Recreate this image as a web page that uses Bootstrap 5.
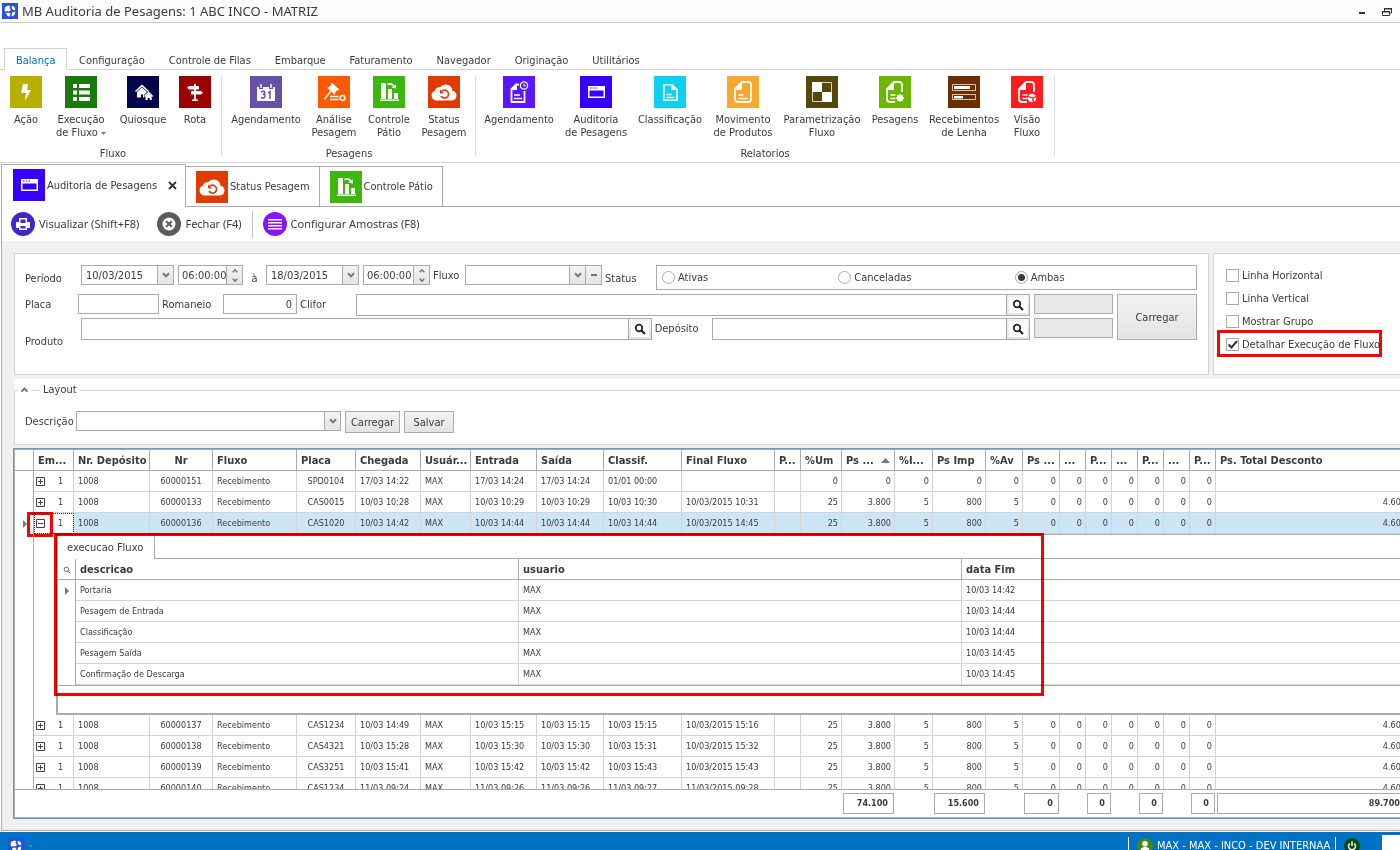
<!DOCTYPE html>
<html lang="pt-BR">
<head>
<meta charset="utf-8">
<meta name="viewport" content="width=device-width, initial-scale=1">
<title>MB Auditoria de Pesagens</title>
<link href="https://cdn.jsdelivr.net/npm/bootstrap@5.3.0/dist/css/bootstrap.min.css" rel="stylesheet">
<style>
:root{--line:#ababab;--soft:#d4d4d4;--panel:#f0f0f0;--accent:#0072c6;--ink:#3b3b3b}
body{font:11px/13px "DejaVu Sans Condensed","DejaVu Sans",sans-serif;color:var(--ink);background:#fff}
button,input,select{font:inherit;color:inherit;border-radius:0}
.app{height:100vh;overflow:hidden}
.titlebar{height:23px;background:#fcfcfc;border-bottom:1px solid #c8c8c8;padding-left:2px}
.titlebar h1{font:13px/22px "Noto Sans",sans-serif;margin:0 0 0 4px}
.titlebar button,.plain{border:0;background:none;padding:0}
.menubar{margin-top:25px;height:22px;border-bottom:1px solid var(--soft);padding-left:4px}
.menubar a{color:inherit;text-decoration:none;padding:6px 12px 0;height:22px}
.menubar a.active{color:var(--accent);border:1px solid var(--soft);border-bottom-color:#fff;padding:5px 11px 0;background:#fff;width:63px}
.ribbon{height:93px;border-bottom:1px solid var(--soft);padding-top:6px;flex:none}
.rgroup{border-right:1px solid #dcdcdc;height:80px;padding:0 3px 0 4px;text-align:center}
.rgroup:first-child{padding:0 1px 0 6px}
.rgroup:last-child{padding:0 3px}
.rgroup button{height:71px;white-space:pre;display:flex;flex-direction:column;align-items:center;line-height:13px}
.rgroup button svg{margin-bottom:5px;flex:none}
.rgroup button span{margin:0 -6px}
.w-40p{width:40px}.w-48p{width:48px}.w-50p{width:50px}.w-54p{width:54px}.w-56p{width:56px}.w-60p{width:60px}
.w-70p{width:70px}.w-72p{width:72px}.w-74p{width:74px}.w-78p{width:78px}.w-80p{width:80px}.w-86p{width:86px}
.doctabs{height:44px;padding:1px 0 0 1px;flex:none}
.doctabs .dtab{border:1px solid var(--line);border-left-width:0;height:41px;margin-top:2px;display:flex;align-items:center;white-space:nowrap;gap:2px;padding:0 9px 0 10px}
.doctabs .dtab.active{border-left-width:1px;border-bottom:0;height:43px;margin-top:0;padding:0 8px 2px 11px;width:185px}
.doctabs .fillline{border-bottom:1px solid var(--line)}
.frame{border-left:1px solid var(--line);border-bottom:1px solid var(--line);margin:0 0 1px 1px;min-height:0}
.tools{height:34px;padding-left:9px;font:11px/14px "Noto Sans",sans-serif;flex:none}
.tools button{display:flex;align-items:center;gap:4px;white-space:nowrap;margin-right:18px}
.tools .vr1{width:1px;height:27px;background:#c0c0c0;margin:0 10px 0 -8px}
.work{background:var(--panel);padding:12px 0 11px 11px;min-height:0}
.toprow{padding-left:1px}
.box{background:#fff;border:1px solid var(--soft)}
.filters{height:122px;padding:11px 11px 0 10px;min-width:0}
.side{width:187px;border-right:0;flex:none;padding:15px 0 0 12px}
.fld{border:1px solid var(--line);background:#fff;height:20px;padding:0 4px;min-width:0;outline:0;color:var(--ink)}
select.fld{appearance:none}
.tall .fld{height:22px}
.off{background:#e9e9e9}
.joined{display:flex}
.joined .fld{border-right:0}
.joined .pick{border:1px solid var(--line);background:linear-gradient(#f3f3f3,#e4e4e4);width:17px;padding:0;height:20px;display:flex;align-items:center;justify-content:center;flex:none}
.tall .joined .pick{height:22px;width:24px}
.tall .pick svg{background:#fff;padding:2px 3px;box-sizing:content-box}
.spin{border:1px solid var(--line);background:linear-gradient(#f3f3f3,#e4e4e4);width:17px;height:20px;flex:none;display:flex;flex-direction:column}
.spin button{height:9px;display:flex;align-items:center;justify-content:center}
.btnx{border:1px solid var(--line);background:linear-gradient(#f3f3f3,#e3e3e3);padding:0}
.lb{white-space:nowrap;flex:none;line-height:13px}
.low{padding-top:7px}
.w-lb{width:56px}
.dt{width:93px;flex:none;margin-right:4px}
.tm{width:65px;flex:none}.tm2{width:67px;flex:none}
.tm .fld,.tm2 .fld{padding-right:0;padding-left:3px}
.lba{width:23px}.lbf{width:35px;padding-left:3px}.fx{width:137px;flex:none}
.fx .lessb{border-left:0;width:16px}
.lbs{width:54px;padding-left:3px}
.r23{gap:2px;min-width:0}
.lbp{width:53px}.pl{width:81px}.lbr{width:64px;padding-left:3px}.rm{width:74px}.lbc{width:59px;padding-left:3px}
.lbpr{padding-top:17px}
.fpr{flex:570 1 0;min-width:0}.fdp{flex:318 1 0;min-width:0}.lbd{width:60px;padding-left:3px}
.offs .fld{width:79px}.load{width:80px;height:46px}
.ds{width:265px;margin-right:4px}.lbl{width:51px}
.b55{width:55px;height:22px;margin-right:4px}.b50{width:50px;height:22px}
.radios{border:1px solid var(--line);height:25px;padding:0 5px}
.radios label,.side label{display:flex;align-items:center;gap:3px}
input[type=radio],input[type=checkbox]{appearance:none;width:13px;height:13px;border:1px solid var(--line);margin:0;background:#fff}
input[type=radio]{border-radius:50%}
input[type=radio]:checked{background:radial-gradient(circle,#3b3b3b 3px,#fff 4px)}
input[type=checkbox]:checked{background:url("data:image/svg+xml,%3Csvg xmlns='http://www.w3.org/2000/svg' viewBox='0 0 11 11'%3E%3Cpath d='M1.5 5.5l3 3L10 2' fill='none' stroke='%23333' stroke-width='2'/%3E%3C/svg%3E")}
.side label{height:13px;margin-bottom:10px;white-space:nowrap}
.hl{position:absolute;border:3px solid red;pointer-events:none;mix-blend-mode:multiply}
.hl-check{inset:-8px 18px -6px -9px}
.layoutbox{background:#fff;margin:4px 0 3px 1px;flex:none}
.layoutbox fieldset{border:1px solid var(--soft);border-right:0;height:66px;padding:10px 0 0 10px}
.layoutbox legend{float:none;width:auto;margin:0 0 0 -7px;padding:0 4px 0 2px;font-size:11px;line-height:22px;display:flex;align-items:center;gap:3px}
.layoutbox legend i{width:8px;height:1px;background:var(--soft)}
.gridbox{border:1px solid #5c9bdd;border-right:0;background:#fff;min-height:0}
.gridin{border:1px solid var(--line);border-right:0;min-height:0}
.gridscroll{overflow:hidden;min-height:0}
.gt{table-layout:fixed;border-collapse:separate;border-spacing:0;width:calc(100% + 10px);font-size:9px;line-height:13px}
.gt th,.gt td{padding:0 4px;border-right:1px solid var(--soft);border-bottom:1px solid var(--soft);height:21px;white-space:nowrap;overflow:hidden}
.gt th{font-size:11px;border-color:var(--line)}
.gt td.n{text-align:right;padding:0 3px}
.gt td.c,.gt th.c{text-align:center}
.gt td.rh{border-right-color:var(--line);border-bottom:0;position:relative;overflow:visible;padding:0}
.gt td.em{padding:0 0 0 2px;position:relative;overflow:visible}
.em button{vertical-align:middle;width:9px;height:9px;line-height:0;display:inline-block}
.em span{display:inline-block;margin-left:13px}
tr.sel td{background:#cde6f7}
tr.sel td.rh,tr.sel td.em{background:#fff}
tr.sel td.em{outline:1px dotted #333;outline-offset:-1px}
.arr{position:absolute;right:6px;top:7px;border:4px solid transparent;border-left-color:#777;border-right:0}
.hl-exp{left:-7px;top:-1px;width:26px;height:25px}
.gt td.detail{height:181px;padding:0 0 0 22px;overflow:visible;border:0;vertical-align:top}
.panelx{border:2px solid var(--line);border-top-width:1px;border-right:0;height:181px;position:relative}
.hl-panel{left:-4px;top:-2px;width:990px;height:163px}
.ptab{width:97px;height:24px;border-right:1px solid var(--line);font-size:11px;padding:6px 0 0 9px}
.ptab+div{border-bottom:1px solid var(--line)}
.nt{table-layout:fixed;border-collapse:separate;border-spacing:0;width:100%;border-bottom:1px solid var(--line);font-size:9px}
.nt td:first-child,.nt th:first-child{border-right-color:var(--line)}
.nt td:first-child{border-bottom:0;position:relative}
.nt td:last-child,.nt th:last-child{border-right:0}
.totals{border-top:1px solid var(--line);overflow:hidden;flex:none}
.totals td{border:0;height:27px;padding:0 1px}
.totals b{display:block;border:1px solid var(--line);height:21px;line-height:19px;padding-right:5px;text-align:right;margin-top:-1px}
.totals b.end{margin-right:1px;padding-right:7px}
.status{background:var(--accent);color:#fff;height:18px;overflow:hidden;flex:none}
.status .sep{width:1px;height:14px;background:#fff;margin-top:5px}
.status svg,.status .tx{margin-top:6px;flex:none}
.status .tx{line-height:16px;white-space:nowrap;width:178px}
.status .cap{width:18px;background:#fff;margin:3px 0 0 22px;height:16px}
</style>
</head>
<body>
<svg width="0" height="0" class="position-absolute" aria-hidden="true">
<defs>
<symbol id="globe" viewBox="0 0 16 16"><path fill="#2452e0" d="M0 0h16v16H0z"/><path fill="#fff" d="M3 4l3-1.500 2 .5-.5 2L9 7 7 8.500 5 8 3.500 9 2.500 7zM9.500 3l2.500.5L13.500 6 12 7.500 10 6zM4 10l3-.5 1.500 2-1 2.300L5 12.500zM10 9.500l3.300-1-.5 3L10.500 13.500 9.500 12z"/></symbol>
<symbol id="bolt" viewBox="0 0 32 32"><path fill="#fff" d="M13 8h5l-1 6h4l-6 11 1-8h-5z"/></symbol>
<symbol id="list" viewBox="0 0 32 32"><path fill="#fff" d="M8 8h4v4H8zM14 8h11v4H14zM8 14.500h4v4H8zM14 14.500h11v4H14zM8 21h4v4H8zM14 21h11v4H14z"/></symbol>
<symbol id="home" viewBox="0 0 32 32"><path fill="none" stroke="#fff" stroke-width="1.600" d="M8.500 15.500L15 9.500l6.500 6M17.500 20.500l4.200-4 4 4"/><path fill="#fff" d="M10 16l5-4.700 5 4.700-3 3v2.500h-1v-3h-2v3h-4zM18.500 20.500l3.200-3 3 3V24h-2v-2h-2v2h-2.200z"/></symbol>
<symbol id="sign" viewBox="0 0 32 32"><path fill="#fff" d="M15 8h2v16h-2zM10 10h10v3.500H10l-2-1.700zM12 15h10l2 1.700-2 1.800H12zM13 23.500h6V25h-6z"/></symbol>
<symbol id="cal" viewBox="0 0 32 32"><path fill="#fff" d="M7 11h18v14H7z"/><path fill="#6650a8" d="M9 10h4v3H9zM19 10h4v3h-4z"/><path fill="#fff" d="M10.300 8h1.400v4h-1.400zM20.300 8h1.400v4h-1.400z"/><path fill="none" stroke="#6650a8" stroke-width="1.500" d="M11 16q3.800-2 3.800.8 0 1.500-2 1.500 2.400 0 2.200 2Q14.500 23 11 21.500M18 17l2-1.500v7.500"/></symbol>
<symbol id="gavel" viewBox="0 0 32 32"><path fill="#fff" d="M14 8l6 5.500-3.500 3.800-6-5.600z"/><path stroke="#fff" stroke-width="1.500" fill="none" d="M13.500 7.300l7.300 6.700M9.800 11.400l7.300 6.700M12.500 15.500L6.500 23M12 20.500h8.500M12 23.500h8.500"/><circle cx="24.500" cy="22" r="2.400" fill="none" stroke="#fff" stroke-width="1.500"/></symbol>
<symbol id="bars" viewBox="0 0 32 32"><path fill="#fff" d="M8 7h5v16H8zM15 13h4v10h-4zM21 17h4v6h-4zM7 23.500h19V25H7z"/><path fill="none" stroke="#fff" stroke-width="1.500" d="M14.500 8.500q4-2 7 2.500"/><path fill="#fff" d="M18.500 11.500l4.500-3v4z"/></symbol>
<symbol id="cloud" viewBox="0 0 32 32"><path fill="#fff" d="M8 24.500a5 5 0 0 1-1-9.700 4.500 4.500 0 0 1 5-3.500 7 7 0 0 1 12.500 3.400 5 5 0 0 1 0 9.800z"/><path fill="none" stroke="#e03c00" stroke-width="1.600" d="M13.500 15.500a4 4 0 1 1-.5 4.500"/><path fill="#e03c00" d="M12 13.500v4h4z"/></symbol>
<symbol id="docclock" viewBox="0 0 32 32"><path fill="none" stroke="#fff" stroke-width="1.800" d="M16 8.500h-3L8.500 13v13h13V15"/><path fill="#fff" d="M14 8v6H8z"/><path stroke="#fff" stroke-width="1.300" d="M11 19h6M11 22.500h8"/><circle cx="21" cy="9.500" r="3.600" fill="none" stroke="#fff" stroke-width="1.300"/><path fill="none" stroke="#fff" d="M21 7.500v2.300h1.700"/></symbol>
<symbol id="win" viewBox="0 0 32 32"><path fill="#fff" d="M8 10h17v12H8z"/><path fill="#3600ff" d="M9.500 14.500h14v6h-14zM10 11.500h1.500v1H10zM12.700 11.500h1.500v1h-1.500zM15.400 11.500h1.500v1h-1.500z"/></symbol>
<symbol id="doc" viewBox="0 0 32 32"><path fill="none" stroke="#fff" stroke-width="1.500" d="M18 8.700h-8v15.600h13V13.500z"/><path fill="#fff" d="M17.500 8l6 6h-6z"/><path stroke="#fff" stroke-width="1.300" d="M12.500 18.500h5M12.500 21.500h8"/></symbol>
<symbol id="doc2" viewBox="0 0 32 32"><path fill="none" stroke="#fff" stroke-width="1.800" d="M15 6h6q3 0 3 3v14q0 3-3 3H11q-3 0-3-3V13z"/><path fill="#fff" d="M15 5.500V14H8z"/><path stroke="#fff" stroke-width="1.300" d="M11.500 19h5M11.500 22.500h9"/></symbol>
<symbol id="check" viewBox="0 0 32 32"><path fill="none" stroke="#d8d4b8" d="M6.500 6.500h19v19h-19z"/><path fill="#fff" d="M6 6h10v10H6zM16 16h10v10H16z"/></symbol>
<symbol id="docpart" viewBox="0 0 32 32"><path fill="none" stroke="#fff" stroke-width="1.800" d="M15 6h5q3 0 3 3v7M16 26h-5q-3 0-3-3V13l7-7"/><path fill="#fff" d="M15 5.500V14H8z"/><path stroke="#fff" stroke-width="1.300" d="M11.500 19h5M11.500 22.500h5"/></symbol>
<symbol id="rows" viewBox="0 0 32 32"><path fill="none" stroke="#d8c4b4" d="M4.500 8.500h23v6h-23zM4.500 18.500h23v5h-23z"/><path fill="#fff" d="M6 10h16v3H6zM6 20h9v2.500H6z"/></symbol>
<symbol id="car" viewBox="0 0 8 8"><path fill="none" stroke="#777" stroke-width="2" d="M1 2.200l3 3.200 3-3.200"/></symbol>
<symbol id="up" viewBox="0 0 8 8"><path fill="none" stroke="#777" stroke-width="2" d="M1 5.600L4 2.400l3 3.200"/></symbol>
<symbol id="lens" viewBox="0 0 12 12"><circle cx="5" cy="5" r="3.300" fill="none" stroke="#222" stroke-width="1.700"/><path stroke="#222" stroke-width="2.200" d="M7.500 7.500L11 11"/></symbol>
<symbol id="plus" viewBox="0 0 9 9"><path fill="#fff" stroke="#444" d="M.5.5h8v8h-8z"/><path stroke="#444" d="M2 4.500h5M4.500 2v5"/></symbol>
<symbol id="minus" viewBox="0 0 9 9"><path fill="#fff" stroke="#444" d="M.5.5h8v8h-8z"/><path stroke="#444" d="M2 4.500h5"/></symbol>
</defs>
</svg>

<div class="app d-flex flex-column">
  <header class="titlebar d-flex align-items-center flex-shrink-0">
    <svg width="16" height="16"><use href="#globe"/></svg>
    <h1 class="flex-grow-1">MB Auditoria de Pesagens: 1 ABC INCO - MATRIZ</h1>
    <button aria-label="Minimizar" class="me-3"><svg width="8" height="8"><path fill="#333" d="M1 4h6v2H1z"/></svg></button>
    <button aria-label="Restaurar" class="me-2"><svg width="10" height="10"><path fill="none" stroke="#333" d="M2.500 4V1.500h7V6H8M.5 4.500h7v4h-7z"/><path fill="#333" d="M2 1h8v1.500H2zM0 4h8v1.500H0z"/></svg></button>
  </header>

  <nav class="menubar d-flex flex-shrink-0">
    <a href="#" class="active">Balança</a><a href="#">Configuração</a><a href="#">Controle de Filas</a><a href="#">Embarque</a><a href="#">Faturamento</a><a href="#">Navegador</a><a href="#">Originação</a><a href="#">Utilitários</a>
  </nav>

  <section class="ribbon d-flex" id="ribbon"></section>

  <div class="doctabs d-flex">
    <div class="dtab active"><svg width="32" height="32"><path fill="#3600ff" d="M0 0h32v32H0z"/><use href="#win"/></svg><span class="flex-grow-1">Auditoria de Pesagens</span><button class="plain" aria-label="Fechar aba"><svg width="9" height="9" class="d-block"><path stroke="#333" stroke-width="1.800" d="M1 1l7 7M8 1L1 8"/></svg></button></div>
    <div class="dtab"><svg width="32" height="32"><path fill="#e03c00" d="M0 0h32v32H0z"/><use href="#cloud"/></svg><span>Status Pesagem</span></div>
    <div class="dtab"><svg width="32" height="32"><path fill="#3cb80c" d="M0 0h32v32H0z"/><use href="#bars"/></svg><span>Controle Pátio</span></div>
    <div class="fillline flex-grow-1"></div>
  </div>

  <main class="frame d-flex flex-column flex-grow-1">
    <div class="tools d-flex align-items-center">
      <button class="plain"><svg width="24" height="24"><circle cx="12" cy="12" r="12" fill="#4326d0"/><path fill="#fff" d="M8 6h8v4h2q1 0 1 1v5h-3v2H8v-2H5v-5q0-1 1-1h2z"/><path fill="#4326d0" d="M9.500 7.500h5V11h-5zM9.500 14h5v2.500h-5z"/></svg>Visualizar (Shift+F8)</button>
      <button class="plain"><svg width="24" height="24"><circle cx="12" cy="12" r="12" fill="#5c5c5c"/><circle cx="12" cy="12" r="6.500" fill="#fff"/><path stroke="#5c5c5c" stroke-width="2" d="M9.200 9.200l5.600 5.600M14.800 9.200l-5.600 5.600"/></svg>Fechar (F4)</button>
      <span class="vr1"></span>
      <button class="plain"><svg width="24" height="24"><circle cx="12" cy="12" r="12" fill="#8a12ff"/><path fill="#fff" d="M5 7h14v1.500H5zM5 10h14v1.500H5zM5 13h14v1.500H5zM5 16h14v1.500H5z"/></svg>Configurar Amostras (F8)</button>
    </div>

    <div class="work d-flex flex-column flex-grow-1">
      <div class="toprow d-flex gap-1 flex-shrink-0">
        <form class="box filters flex-grow-1" onsubmit="return false">
          <div class="d-flex align-items-start">
            <label class="lb w-lb low" for="d1">Período</label>
            <div class="joined dt"><input class="fld w-100" id="d1" value="10/03/2015"><button class="pick" aria-label="Abrir calendário"><svg width="8" height="8"><use href="#car"/></svg></button></div>
            <div class="joined tm"><input class="fld w-100" aria-label="Hora inicial" value="06:00:00"><span class="spin"><button class="plain" aria-label="Mais"><svg width="6" height="6"><use href="#up"/></svg></button><button class="plain" aria-label="Menos"><svg width="6" height="6"><use href="#car"/></svg></button></span></div>
            <label class="lb low text-center lba" for="d2">à</label>
            <div class="joined dt"><input class="fld w-100" id="d2" value="18/03/2015"><button class="pick" aria-label="Abrir calendário"><svg width="8" height="8"><use href="#car"/></svg></button></div>
            <div class="joined tm2"><input class="fld w-100" aria-label="Hora final" value="06:00:00"><span class="spin"><button class="plain" aria-label="Mais"><svg width="6" height="6"><use href="#up"/></svg></button><button class="plain" aria-label="Menos"><svg width="6" height="6"><use href="#car"/></svg></button></span></div>
            <label class="lb lbf pt-1" for="fx">Fluxo</label>
            <div class="joined fx"><select class="fld w-100" id="fx"><option></option></select><button class="pick" tabindex="-1" aria-label="Abrir lista"><svg width="8" height="8"><use href="#car"/></svg></button><button class="pick lessb" aria-label="Limpar"><svg width="6" height="8"><path fill="#777" d="M0 3h6v2H0z"/></svg></button></div>
            <span class="lb lbs low">Status</span>
            <div class="radios d-flex flex-grow-1">
              <label class="col"><input type="radio" name="st">Ativas</label><label class="col"><input type="radio" name="st">Canceladas</label><label class="col"><input type="radio" name="st" checked>Ambas</label>
            </div>
          </div>
          <div class="d-flex gap-1 mt-1">
            <div class="flex-grow-1 d-flex flex-column r23">
              <div class="d-flex align-items-start">
                <label class="lb lbp pt-1" for="pl">Placa</label><input class="fld pl" id="pl">
                <label class="lb lbr pt-1" for="rm">Romaneio</label><input class="fld rm text-end" id="rm" value="0">
                <label class="lb lbc pt-1" for="cl">Clifor</label>
                <div class="tall flex-grow-1"><div class="joined"><input class="fld w-100" id="cl"><button class="pick" aria-label="Buscar"><svg width="12" height="12"><use href="#lens"/></svg></button></div></div>
              </div>
              <div class="d-flex align-items-start tall">
                <label class="lb w-lb lbpr" for="pr">Produto</label>
                <div class="joined fpr"><input class="fld w-100" id="pr"><button class="pick" aria-label="Buscar"><svg width="12" height="12"><use href="#lens"/></svg></button></div>
                <label class="lb lbd pt-1" for="dp">Depósito</label>
                <div class="joined fdp"><input class="fld w-100" id="dp"><button class="pick" aria-label="Buscar"><svg width="12" height="12"><use href="#lens"/></svg></button></div>
              </div>
            </div>
            <div class="d-flex flex-column gap-1 offs"><input class="fld off" disabled aria-label="Código do clifor"><input class="fld off" disabled aria-label="Código do depósito"></div>
            <button class="btnx load">Carregar</button>
          </div>
        </form>
        <div class="box side">
          <label><input type="checkbox">Linha Horizontal</label>
          <label><input type="checkbox">Linha Vertical</label>
          <label><input type="checkbox">Mostrar Grupo</label>
          <label class="position-relative"><input type="checkbox" checked>Detalhar Execução de Fluxo<span class="hl hl-check"></span></label>
        </div>
      </div>

      <div class="layoutbox">
        <fieldset>
          <legend><svg width="9" height="8"><use href="#up"/></svg><i></i><span>Layout</span></legend>
          <div class="d-flex align-items-start">
            <label class="lb lbl pt-1" for="ds">Descrição</label>
            <div class="joined ds"><select class="fld w-100" id="ds"><option></option></select><button class="pick" tabindex="-1" aria-label="Abrir lista"><svg width="8" height="8"><use href="#car"/></svg></button></div>
            <button class="btnx b55">Carregar</button><button class="btnx b50">Salvar</button>
          </div>
        </fieldset>
      </div>

      <div class="gridbox d-flex flex-column flex-grow-1">
        <div class="gridin d-flex flex-column flex-grow-1">
          <div class="gridscroll flex-grow-1"><table class="gt" id="grid"></table></div>
          <div class="totals"><table class="gt" id="totals"></table></div>
        </div>
      </div>
    </div>
  </main>

  <footer class="status d-flex">
    <svg width="16" height="16" class="ms-2"><use href="#globe"/></svg>
    <svg width="5" height="16" class="ms-1"><path fill="#5a7a9a" d="M0 7h5l-2.500 3z"/></svg>
    <span class="flex-grow-1"></span>
    <span class="sep me-2"></span>
    <svg width="16" height="16"><circle cx="8" cy="8" r="8" fill="#3f8a12"/><circle cx="8" cy="5.800" r="2.800" fill="#fff"/><path fill="#fff" d="M3.500 13q0-4 4.500-4t4.500 4z"/></svg>
    <span class="tx ms-1">MAX - MAX - INCO - DEV INTERNAA</span>
    <span class="sep me-2"></span>
    <svg width="16" height="16"><circle cx="8" cy="8" r="8" fill="#0c4c10"/><path fill="none" stroke="#fff" stroke-width="1.500" d="M5.800 5.500a3.500 3.500 0 1 0 4.400 0M8 3.500v4.500"/></svg>
    <span class="cap"></span>
  </footer>
</div>

<script src="https://cdn.jsdelivr.net/npm/bootstrap@5.3.0/dist/js/bootstrap.bundle.min.js"></script>
<script>
const tile = (bg, id, extra = '') => `<svg width="32" height="32"><path fill="${bg}" d="M0 0h32v32H0z"/><use href="#${id}"/>${extra}</svg>`;
const groups = [
  ['Fluxo', [['Ação', 40, tile('#b7b000', 'bolt')], ['Execução\nde Fluxo \u25BE', 70, tile('#1b7a0c', 'list')], ['Quiosque', 54, tile('#04044c', 'home')], ['Rota', 50, tile('#9c0000', 'sign')]]],
  ['Pesagens', [['Agendamento', 80, tile('#6650a8', 'cal')], ['Análise\nPesagem', 56, tile('#ff5a00', 'gavel')], ['Controle\nPátio', 54, tile('#3cb80c', 'bars')], ['Status\nPesagem', 56, tile('#e03c00', 'cloud')]]],
  ['Relatorios', [['Agendamento', 80, tile('#5a16ff', 'docclock')], ['Auditoria\nde Pesagens', 74, tile('#3600ff', 'win')], ['Classificação', 74, tile('#10d0f0', 'doc')], ['Movimento\nde Produtos', 72, tile('#f8a830', 'doc2')], ['Parametrização\nFluxo', 86, tile('#54480c', 'check')], ['Pesagens', 60, tile('#6cb800', 'docpart', '<circle cx="21" cy="22" r="3" fill="#fff"/><path stroke="#fff" stroke-width="1.300" d="M21 18v8M17 22h8M18.200 19.200l5.600 5.600M23.800 19.200l-5.600 5.600"/>')], ['Recebimentos\nde Lenha', 78, tile('#6a2e00', 'rows')], ['Visão\nFluxo', 48, tile('#ff1c1c', 'docpart', '<circle cx="21" cy="22" r="4.300" fill="#fff"/><path fill="none" stroke="#ff1c1c" stroke-width="1.300" d="M16 20l5.500 2 4-1.500M21.500 22l1 4.500"/>')]]]
];
document.getElementById('ribbon').innerHTML = groups.map(([name, items]) =>
  `<div class="rgroup"><div class="d-flex">${items.map(([t, w, s]) => `<button class="plain w-${w}p">${s}<span>${t.replace('\u25BE', '<svg width="5" height="3" class="m-0 align-middle"><path fill="#777" d="M0 0h5L2.500 3z"/></svg>')}</span></button>`).join('')}</div><span class="d-block">${name}</span></div>`).join('');

const widths = [19, 40, 76, 63, 84, 59, 65, 50, 66, 67, 78, 93, 26, 41, 53, 38, 53, 37, 37, 26, 26, 26, 26, 26, 26];
const cols = '<colgroup>' + widths.map(w => `<col style="width:${w}px">`).join('') + '<col></colgroup>';
const heads = ['', 'Em...', 'Nr. Depósito', 'Nr', 'Fluxo', 'Placa', 'Chegada', 'Usuár...', 'Entrada', 'Saída', 'Classif.', 'Final Fluxo', 'P...', '%Um', 'Ps ...', '%I...', 'Ps Imp', '%Av', 'Ps ...', '...', 'P...', '...', 'P...', '...', 'P...', 'Ps. Total Desconto'];
const rows = [
  ['60000151', 'SPD0104', '17/03 14:22', '17/03 14:24', '17/03 14:24', '01/01 00:00', ''],
  ['60000133', 'CAS0015', '10/03 10:28', '10/03 10:29', '10/03 10:29', '10/03 10:30', '10/03/2015 10:31'],
  ['60000136', 'CAS1020', '10/03 14:42', '10/03 14:44', '10/03 14:44', '10/03 14:44', '10/03/2015 14:45'],
  ['60000137', 'CAS1234', '10/03 14:49', '10/03 15:15', '10/03 15:15', '10/03 15:15', '10/03/2015 15:16'],
  ['60000138', 'CAS4321', '10/03 15:28', '10/03 15:30', '10/03 15:30', '10/03 15:31', '10/03/2015 15:32'],
  ['60000139', 'CAS3251', '10/03 15:41', '10/03 15:42', '10/03 15:42', '10/03 15:43', '10/03/2015 15:43'],
  ['60000140', 'CAS1234', '11/03 09:24', '11/03 09:26', '11/03 09:26', '11/03 09:27', '11/03/2015 09:28']
];
const steps = [['Portaria', '14:42'], ['Pesagem de Entrada', '14:44'], ['Classificação', '14:44'], ['Pesagem Saída', '14:45'], ['Confirmação de Descarga', '14:45']];
const td = (v, c = '') => `<td class="${c}">${v}</td>`;
const detail = `<tr><td class="rh"></td><td class="detail" colspan="25"><div class="panelx"><div class="d-flex"><div class="ptab">execucao Fluxo</div><div class="flex-grow-1"></div></div>
<table class="nt"><colgroup><col style="width:18px"><col style="width:443px"><col style="width:443px"><col></colgroup>
<tr><th class="p-0 text-center"><svg width="8" height="8" viewBox="0 0 12 12"><circle cx="5" cy="5" r="3.300" fill="none" stroke="#666" stroke-width="1.500"/><path stroke="#666" stroke-width="1.500" d="M7.500 7.500L11 11"/></svg></th><th>descricao</th><th>usuario</th><th>data Fim</th></tr>
${steps.map((s, i) => `<tr><td>${i ? '' : '<span class="arr"></span>'}</td><td>${s[0]}</td><td>MAX</td><td>10/03 ${s[1]}</td></tr>`).join('')}</table><span class="hl hl-panel"></span></div></td></tr>`;
document.getElementById('grid').innerHTML = cols + '<thead><tr>' + heads.map((h, i) => `<th class="${i === 3 ? 'c' : ''}">${i === 14 ? '<span class="d-flex justify-content-between align-items-center">Ps ...<svg width="9" height="5"><path fill="#777" d="M0 5h9L4.500 0z"/></svg></span>' : h}</th>`).join('') + '</tr></thead><tbody>' +
  rows.map((r, i) => {
    const sel = i === 2, nums = i ? ['25', '3.800', '5', '800', '5'] : ['0', '0', '0', '0', '0'];
    return `<tr class="${sel ? 'sel' : ''}">` + td(sel ? '<span class="arr"></span>' : '', 'rh') +
      td(`<button class="plain" aria-label="Detalhar"><svg width="9" height="9" class="d-block"><use href="#${sel ? 'minus' : 'plus'}"/></svg></button><span>1</span>${sel ? '<i class="hl hl-exp"></i>' : ''}`, 'em') +
      td('1008') + td(r[0], 'c') + td('Recebimento') + td(r[1], 'c') + td(r[2]) + td('MAX') + td(r[3]) + td(r[4]) + td(r[5]) + td(r[6]) + td('') +
      nums.map(n => td(n, 'n')).join('') + td('0', 'n').repeat(7) + td(i ? '4.600' : '', 'n') + '</tr>' + (sel ? detail : '');
  }).join('') + '</tbody>';
const sums = {14: '74.100', 16: '15.600', 18: '0', 20: '0', 22: '0', 24: '0', 25: '89.700'};
document.getElementById('totals').innerHTML = cols + '<tr>' + heads.map((h, i) => `<td>${i in sums ? `<b${i === 25 ? ' class="end"' : ''}>${sums[i]}</b>` : ''}</td>`).join('') + '</tr>';
</script>
</body>
</html>
